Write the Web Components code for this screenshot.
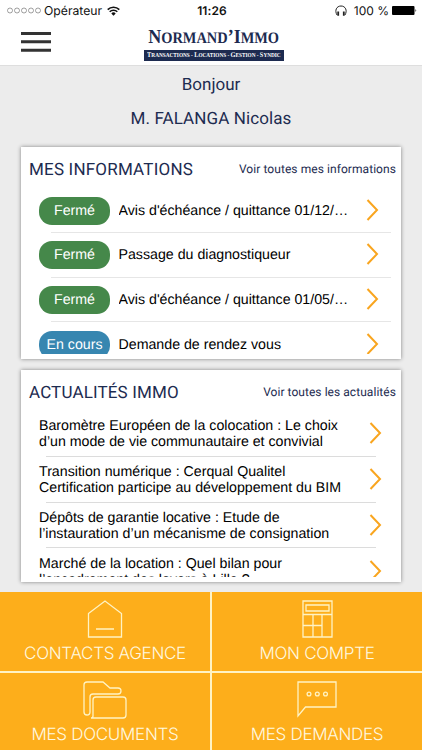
<!DOCTYPE html>
<html lang="fr">
<head>
<meta charset="utf-8">
<meta name="viewport" content="width=device-width, initial-scale=1">
<title>Normand'Immo</title>
<style>
    body{
        margin:0;
        font-family:"Liberation Sans",sans-serif;
        text-rendering:geometricPrecision;
        --navy:#1d2b50;
        --orange:#fdae1b;
    }
</style>
</head>
<body>
<immo-app>
    <status-bar slot="top"></status-bar>
    <app-header slot="top"></app-header>
    <user-greeting name="M. FALANGA Nicolas">Bonjour</user-greeting>
    <info-card heading="MES INFORMATIONS" more="Voir toutes mes informations" style="--heading-gap:.2px;--more-gap:.07px">
        <request-row state="Fermé">Avis d'échéance / quittance 01/12/2016</request-row>
        <request-row state="Fermé">Passage du diagnostiqueur</request-row>
        <request-row state="Fermé">Avis d'échéance / quittance 01/05/2016</request-row>
        <request-row state="En cours" color="#3786b0">Demande de rendez vous</request-row>
    </info-card>
    <info-card heading="ACTUALITÉS IMMO" more="Voir toutes les actualités" style="--heading-gap:.15px;--more-gap:.05px">
        <news-row>Baromètre Européen de la colocation : Le choix<br>d’un mode de vie communautaire et convivial</news-row>
        <news-row>Transition numérique : Cerqual Qualitel<br>Certification participe au développement du BIM</news-row>
        <news-row>Dépôts de garantie locative : Etude de<br>l’instauration d’un mécanisme de consignation</news-row>
        <news-row>Marché de la location : Quel bilan pour<br>l’encadrement des loyers à Lille ?</news-row>
    </info-card>
    <nav-tile slot="nav" label="CONTACTS AGENCE">
        <svg width="36" height="38" viewBox="0 0 36 38"><path d="M1.500 13.500 18 1l16.500 12.500V37h-33zM9 29h18"/></svg>
    </nav-tile>
    <nav-tile slot="nav" label="MON COMPTE">
        <svg width="31" height="38" viewBox="0 0 31 38"><path d="M1 1h29v36H1zM4 5h23v6H4zM1 14.500h29M11 14.500V37M20 14.500V37M1 25.500h19"/></svg>
    </nav-tile>
    <nav-tile slot="nav" label="MES DOCUMENTS">
        <svg width="44" height="38" viewBox="0 0 44 38"><path d="M10 13H35a3 3 0 0 0 0-6H27L20 1H4a3 3 0 0 0-3 3V31a3 3 0 0 0 6 0V16a3 3 0 0 1 3-3M13 16H40a3 3 0 0 1 3 3V34a3 3 0 0 1-3 3H8a2 2 0 0 0 2-2V19a3 3 0 0 1 3-3z"/></svg>
    </nav-tile>
    <nav-tile slot="nav" label="MES DEMANDES">
        <svg width="40" height="38" viewBox="0 0 40 38"><path d="M1 1h38v25H8.500L1 35z"/><circle cx="12" cy="13" r="1.900"/><circle cx="20.300" cy="13" r="1.900"/><circle cx="28.500" cy="13" r="1.900"/></svg>
    </nav-tile>
</immo-app>

<script>
class ImmoApp extends HTMLElement{
    constructor(){
        super()
        this.attachShadow({mode:'open'})
        this.render()
    }

    render(){
        this.shadowRoot.innerHTML = `
        <style>
            :host{
                display:flex;
                flex-direction:column;
                height:750px;
                overflow:hidden;
                background:#ececec;
            }
            .top{
                height:65px;
                background:#fff;
                border-bottom:1px solid #dedede;
            }
            main{
                flex:1;
                display:flex;
                flex-direction:column;
                align-items:center;
                gap:11px;
            }
            nav{
                display:grid;
                grid-template-columns:210px 210px;
                grid-template-rows:79px 77px;
                gap:2px;
                background:#fff3c4;
            }
        </style>
        <div class="top"><slot name="top"></slot></div>
        <main><slot></slot></main>
        <nav><slot name="nav"></slot></nav>`
    }
}

class StatusBar extends HTMLElement{
    constructor(){
        super()
        this.attachShadow({mode:'open'})
        this.render()
    }

    render(){
        this.shadowRoot.innerHTML = `
        <style>
            :host{
                display:grid;
                grid-template-columns:1fr auto 1fr;
                align-items:center;
                height:20px;
                padding:1px 5px 0 7px;
                box-sizing:border-box;
                font:12px/19px Inter,sans-serif;
                color:#111;
            }
            div{
                display:flex;
                align-items:center;
            }
            .dots{
                margin-right:2px;
            }
            .wifi{
                margin-left:5px;
            }
            .carrier{
                font-size:12.200px;
            }
            b{
                font-weight:600;
                letter-spacing:.1px;
            }
            .right{
                justify-content:flex-end;
            }
            .right span{
                margin:0 3px 0 7px;
            }
        </style>
        <div>
            <svg class="dots" width="35" height="7" viewBox="0 0 35 7" fill="none" stroke="#777" stroke-width=".7"><circle cx="3" cy="3.500" r="2.500"/><circle cx="10" cy="3.500" r="2.500"/><circle cx="17" cy="3.500" r="2.500"/><circle cx="24" cy="3.500" r="2.500"/><circle cx="31" cy="3.500" r="2.500"/></svg>
            <span class="carrier">Opérateur</span>
            <svg class="wifi" width="13" height="10" viewBox="0 0 13 10" fill="none" stroke="#111" stroke-width="1.600"><path d="M.7 3.600a8.200 8.200 0 0 1 11.600 0M2.700 5.800a5.300 5.300 0 0 1 7.600 0"/><path d="M4.300 7.400a3.100 3.100 0 0 1 4.400 0L6.500 9.700z" fill="#111" stroke="none"/></svg>
        </div>
        <b>11:26</b>
        <div class="right">
            <svg width="12" height="12" viewBox="0 0 12 12" fill="none" stroke="#222"><path d="M2 10C-.6 5.500 1.500 1 6 1s6.600 4.500 4 9"/><path d="M3.200 6.500v4.200M8.800 6.500v4.200" stroke-width="1.800"/></svg>
            <span>100 %</span>
            <svg width="25" height="9" viewBox="0 0 25 9"><rect width="22.500" height="9" rx="1"/><path d="M23.500 3q1.500 1.500 0 3z"/></svg>
        </div>`
    }
}

class AppHeader extends HTMLElement{
    constructor(){
        super()
        this.attachShadow({mode:'open'})
        this.render()
    }

    render(){
        this.shadowRoot.innerHTML = `
        <style>
            :host{
                display:grid;
                grid-template-columns:1fr 140px 1fr;
                height:45px;
                padding:0 15px 0 21px;
                color:var(--navy);
                font-family:"Liberation Serif",serif;
            }
            .burger{
                margin-top:12px;
            }
            .logo{
                display:flex;
                flex-direction:column;
                align-items:center;
                white-space:nowrap;
            }
            .name{
                height:24px;
                margin-top:5.500px;
                font-size:16px;
                font-weight:bold;
                line-height:22px;
                transform:scaleX(.9);
            }
            .name big{
                font-size:20px;
            }
            .tag{
                display:flex;
                justify-content:center;
                width:140px;
                height:11px;
                background:var(--navy);
                color:#fff;
                font-size:6px;
                font-weight:bold;
                line-height:11px;
            }
            .tag span{
                transform:scaleX(.88);
            }
            .tag big{
                font-size:7.200px;
            }
        </style>
        <svg class="burger" width="30" height="20" viewBox="0 0 30 20"><path d="M0 1.500h30M0 9.700h30M0 18.200h30" stroke="#333" stroke-width="3"/></svg>
        <div class="logo">
            <div class="name"><big>N</big>ORMAND<big>’I</big>MMO</div>
            <div class="tag"><span><big>T</big>RANSACTIONS - <big>L</big>OCATIONS - <big>G</big>ESTION - <big>S</big>YNDIC</span></div>
        </div>`
    }
}

class UserGreeting extends HTMLElement{
    constructor(){
        super()
        this.attachShadow({mode:'open'})
        this.render()
    }

    render(){
        this.shadowRoot.innerHTML = `
        <style>
            :host{
                display:block;
                height:68px;
                padding-top:2px;
                color:var(--navy);
                font:17px/34px Roboto,sans-serif;
                text-align:center;
            }
            p{
                margin:0;
            }
            .name{
                letter-spacing:.1px;
            }
        </style>
        <p><slot></slot></p>
        <p class="name">${this.getAttribute('name')}</p>`
    }
}

class InfoCard extends HTMLElement{
    constructor(){
        super()
        this.attachShadow({mode:'open'})
        this.render()
    }

    render(){
        this.shadowRoot.innerHTML = `
        <style>
            :host{
                display:block;
                width:380px;
                height:212px;
                background:#fff;
                box-shadow:0 0 4px rgba(0,0,0,.45);
            }
            header{
                display:flex;
                justify-content:space-between;
                height:41px;
                padding:0 5px 0 8px;
                color:var(--navy);
                font:17px/44px Roboto,sans-serif;
            }
            h2{
                margin:0;
                font:inherit;
                line-height:46px;
                letter-spacing:var(--heading-gap,0);
            }
            a{
                font-size:12px;
                letter-spacing:var(--more-gap,0);
            }
            .list{
                height:166px;
                overflow:hidden;
            }
        </style>
        <header>
            <h2>${this.getAttribute('heading')}</h2>
            <a>${this.getAttribute('more')}</a>
        </header>
        <div class="list"><slot></slot></div>`
    }
}

const chevron = `<svg width="13" height="22" viewBox="0 0 13 22" fill="none" stroke="#f9a51f" stroke-width="2"><path d="M1.500 1 11 11 1.500 21"/></svg>`

class RequestRow extends HTMLElement{
    constructor(){
        super()
        this.attachShadow({mode:'open'})
        this.render()
    }

    render(){
        const color = this.getAttribute('color') || '#45884a'
        this.shadowRoot.innerHTML = `
        <style>
            :host{
                display:block;
                height:44.800px;
                font-size:14.200px;
            }
            .row{
                display:flex;
                align-items:center;
                box-sizing:border-box;
                height:43.800px;
                padding:1.500px 22px 0 18px;
            }
            .state{
                width:71px;
                height:28px;
                border-radius:13px;
                background:${color};
                color:#fff;
                line-height:29px;
                text-align:center;
            }
            .title{
                width:233px;
                margin-left:8.500px;
                overflow:hidden;
                white-space:nowrap;
                text-overflow:ellipsis;
                color:#000;
                line-height:20px;
            }
            svg{
                margin:0 0 2px auto;
            }
            hr{
                height:1px;
                margin:0 10px 0 30px;
                border:0;
                background:#e6e6e6;
            }
        </style>
        <div class="row">
            <span class="state">${this.getAttribute('state')}</span>
            <span class="title"><slot></slot></span>
            ${chevron}
        </div>
        <hr>`
    }
}

class NewsRow extends HTMLElement{
    constructor(){
        super()
        this.attachShadow({mode:'open'})
        this.render()
    }

    render(){
        this.shadowRoot.innerHTML = `
        <style>
            :host{
                display:block;
                height:45.800px;
                font-size:14.200px;
            }
            .row{
                display:flex;
                align-items:center;
                justify-content:space-between;
                height:44.800px;
                padding:0 19px 0 18px;
            }
            .title{
                padding-top:2px;
                color:#000;
                line-height:16px;
                white-space:nowrap;
            }
            hr{
                height:1px;
                margin:0 25px;
                border:0;
                background:#dcdcdc;
            }
        </style>
        <div class="row">
            <span class="title"><slot></slot></span>
            ${chevron}
        </div>
        <hr>`
    }
}

class NavTile extends HTMLElement{
    constructor(){
        super()
        this.attachShadow({mode:'open'})
        this.render()
    }

    render(){
        this.shadowRoot.innerHTML = `
        <style>
            :host{
                display:flex;
                flex-direction:column;
                align-items:center;
                padding-top:7.500px;
                background:var(--orange);
                color:#fff9e0;
                font:350 17px/22px Inter,sans-serif;
                letter-spacing:-.3px;
            }
            ::slotted(svg){
                fill:none;
                stroke:#fff3c4;
                stroke-width:1.3;
            }
            span{
                margin-top:5px;
                white-space:nowrap;
            }
        </style>
        <slot></slot>
        <span>${this.getAttribute('label')}</span>`
    }
}

customElements.define('immo-app',ImmoApp)
customElements.define('status-bar',StatusBar)
customElements.define('app-header',AppHeader)
customElements.define('user-greeting',UserGreeting)
customElements.define('info-card',InfoCard)
customElements.define('request-row',RequestRow)
customElements.define('news-row',NewsRow)
customElements.define('nav-tile',NavTile)
</script>
</body>
</html>
